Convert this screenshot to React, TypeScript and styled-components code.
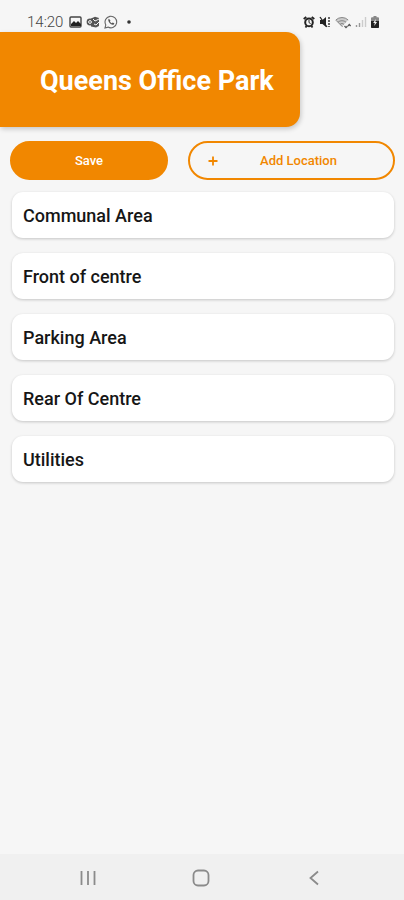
import React from "react";
import styled, { createGlobalStyle } from "styled-components";

const ORANGE = "#f18700";

const GlobalStyle = createGlobalStyle`
  *, *::before, *::after { box-sizing: border-box; }
  body {
    margin: 0;
    background: #f6f6f6;
    font-family: Roboto, "Liberation Sans", sans-serif;
  }
`;

const Screen = styled.div`
  min-height: 100vh;
  display: flex;
  flex-direction: column;
`;

const StatusBar = styled.div`
  display: flex;
  align-items: center;
  justify-content: space-between;
  height: 32px;
  padding: 12px 25px 0 27px;
  color: #333;
`;

const StatusGroup = styled.div`
  display: flex;
  align-items: center;
  gap: 4px;

  svg { display: block; }
`;

const Clock = styled.time`
  margin-right: 2px;
  font-size: 15px;
  line-height: 20px;
  font-weight: 300;
  color: #444;
`;

const Header = styled.header`
  display: flex;
  align-items: center;
  width: calc(100% - 104px);
  min-height: 95px;
  padding: 2px 20px 0 40px;
  border-radius: 0 14px 14px 0;
  background: ${ORANGE};
  box-shadow: 1px 2px 5px rgba(0, 0, 0, 0.2);
`;

const Title = styled.h1`
  margin: 0;
  color: #fff;
  font-size: 27px;
  line-height: 32px;
  font-weight: 700;
  white-space: nowrap;
`;

const Actions = styled.div`
  display: grid;
  grid-template-columns: 158fr 207fr;
  gap: 20px;
  padding: 14px 9px 12px 10px;
`;

const ActionButton = styled.button<{ $outlined?: boolean }>`
  display: flex;
  align-items: center;
  height: 39px;
  padding: ${(p) => (p.$outlined ? "0 14px 0 18px" : "0 18px")};
  border: 2px solid ${ORANGE};
  border-radius: 20px;
  background: ${(p) => (p.$outlined ? "transparent" : ORANGE)};
  color: ${(p) => (p.$outlined ? ORANGE : "#fff")};
  font: 500 13px/16px Roboto, "Liberation Sans", sans-serif;
  cursor: pointer;
`;

const ActionLabel = styled.span`
  flex: 1;
  text-align: center;
`;

const LocationList = styled.ul`
  display: flex;
  flex: 1;
  flex-direction: column;
  gap: 15px;
  margin: 0;
  padding: 0 10px 20px 12px;
  list-style: none;
`;

const LocationCard = styled.button`
  display: block;
  width: 100%;
  min-height: 46px;
  padding: 2px 11px 0;
  border: 0;
  border-radius: 11px;
  background: #fff;
  box-shadow: 0 1px 3px rgba(0, 0, 0, 0.2);
  color: #161616;
  font: 500 18px/24px Roboto, "Liberation Sans", sans-serif;
  text-align: left;
  cursor: pointer;
`;

const NavBar = styled.nav`
  display: grid;
  grid-template-columns: repeat(3, 113px);
  justify-content: center;
  height: 46px;
  padding: 2px 2px 0 0;
  background: #f0f0f0;
`;

const NavButton = styled.button`
  display: flex;
  align-items: center;
  justify-content: center;
  padding: 0;
  border: 0;
  background: none;
  color: #8b8b8b;
  cursor: pointer;
`;

const PictureIcon = () => (
  <svg width="13" height="12" viewBox="0 0 13 12" aria-hidden="true">
    <rect x="1" y="1" width="11" height="10" rx="1" fill="none" stroke="#444" strokeWidth="1.4" />
    <path d="M2 10V8l3-3 2 2 2-2 3 3v2z" fill="#222" />
  </svg>
);

const MailIcon = () => (
  <svg width="14" height="12" viewBox="0 0 14 12" aria-hidden="true">
    <path d="M5 2.5 9 .7 13 2v8l-3 1.5-5-1z" fill="#555" />
    <path d="m7 3 2 2 4-2M8 8l2 1 3-3" fill="none" stroke="#f6f6f6" strokeWidth="1" />
    <circle cx="4" cy="6" r="3.4" fill="#555" />
    <circle cx="4" cy="6" r="1.4" fill="none" stroke="#f6f6f6" />
  </svg>
);

const ChatIcon = () => (
  <svg width="14" height="14" viewBox="0 0 14 14" aria-hidden="true">
    <path d="m1 13 .8-3.1A5.8 5.8 0 1 1 4 12.1z" fill="none" stroke="#666" strokeWidth="1.1" />
    <path d="M4.8 3.8c-1.9 1.6 1.7 6.5 4.5 5.9.9-.3 1-.9.9-1.4L8.7 7.6l-.8.7C7 7.9 6.2 7 5.9 6.2l.6-.8z" fill="#555" />
  </svg>
);

const NotificationDot = () => (
  <svg width="12" height="4" viewBox="0 0 12 4" aria-hidden="true">
    <circle cx="7" cy="2" r="1.8" fill="#333" />
  </svg>
);

const AlarmIcon = () => (
  <svg width="12" height="12" viewBox="0 0 12 12" aria-hidden="true">
    <path d="M.7 3 3.3 1M11.3 3 8.7 1M2.5 11.5l1-1.500M9.500 11.500l-1-1.500" stroke="#222" strokeWidth="1.8" />
    <circle cx="6" cy="6.4" r="3.8" fill="none" stroke="#222" strokeWidth="2" />
    <path d="M6 4v2.600l1.600 1" fill="none" stroke="#222" strokeWidth="1" />
  </svg>
);

const MuteIcon = () => (
  <svg width="12" height="12" viewBox="0 0 12 12" aria-hidden="true">
    <path d="M1 4h2.500L7 1v10L3.500 8H1z" fill="#222" />
    <path d="m1 1 7 10" stroke="#222" strokeWidth="1.3" />
    <path d="M10 1v10" stroke="#444" strokeWidth="1.6" strokeDasharray="2 1" />
  </svg>
);

const WifiIcon = () => (
  <svg width="16" height="13" viewBox="0 0 16 13" aria-hidden="true">
    <path d="M.8 4a9 9 0 0 1 12.400 0L7 10.800z" fill="#ccc" />
    <path d="M.8 4a9 9 0 0 1 12.400 0M3 6.200a6 6 0 0 1 8 0M5 8.300a3 3 0 0 1 4 0" fill="none" stroke="#888" strokeWidth="1" />
    <path d="m1 4.300 6.500 6.500" stroke="#888" strokeWidth="1" />
    <path d="M9.500 10 11 11.700l1.500-1.700M13 10l1.300-1.500 1.300 1.500" fill="none" stroke="#555" strokeWidth="1.2" />
  </svg>
);

const SignalIcon = () => (
  <svg width="12" height="12" viewBox="0 0 12 12" aria-hidden="true">
    <path d="M1.500 9v2M4.500 7v4" stroke="#999" strokeWidth="1.4" />
    <path d="M7.500 4v7M10.500 1v10" stroke="#ccc" strokeWidth="1.4" />
  </svg>
);

const BatteryIcon = () => (
  <svg width="8" height="12" viewBox="0 0 8 12" aria-hidden="true">
    <path d="M2.500 0h3v1.200H7q1 0 1 1V11q0 1-1 1H1q-1 0-1-1V2.200q0-1 1-1h1.500z" fill="#888" />
    <path d="M0 5h8v6q0 1-1 1H1q-1 0-1-1z" fill="#222" />
    <path d="M4.800 3 2.200 7h1.600L3.200 10 6 6H4.400z" fill="#f6f6f6" />
  </svg>
);

const PlusIcon = () => (
  <svg width="10" height="10" viewBox="0 0 10 10" aria-hidden="true">
    <path d="M5 .5v9M.5 5h9" stroke={ORANGE} strokeWidth="1.8" />
  </svg>
);

const RecentsIcon = () => (
  <svg width="16" height="16" viewBox="0 0 16 16" aria-hidden="true">
    <path d="M1.500 1v14M8 1v14M14.500 1v14" stroke="currentColor" strokeWidth="1.8" />
  </svg>
);

const HomeIcon = () => (
  <svg width="18" height="18" viewBox="0 0 18 18" aria-hidden="true">
    <rect x="1.5" y="1.5" width="15" height="15" rx="4.5" fill="none" stroke="currentColor" strokeWidth="1.8" />
  </svg>
);

const BackIcon = () => (
  <svg width="10" height="16" viewBox="0 0 10 16" aria-hidden="true">
    <path d="M9 1.500 1.500 8 9 14.500" fill="none" stroke="currentColor" strokeWidth="1.8" />
  </svg>
);

const locations = ["Communal Area", "Front of centre", "Parking Area", "Rear Of Centre", "Utilities"];

export default function App() {
  return (
    <>
      <GlobalStyle />
      <Screen>
        <StatusBar>
          <StatusGroup>
            <Clock>14:20</Clock>
            <PictureIcon />
            <MailIcon />
            <ChatIcon />
            <NotificationDot />
          </StatusGroup>
          <StatusGroup>
            <AlarmIcon />
            <MuteIcon />
            <WifiIcon />
            <SignalIcon />
            <BatteryIcon />
          </StatusGroup>
        </StatusBar>
        <Header>
          <Title>Queens Office Park</Title>
        </Header>
        <Actions>
          <ActionButton type="button">
            <ActionLabel>Save</ActionLabel>
          </ActionButton>
          <ActionButton type="button" $outlined>
            <PlusIcon />
            <ActionLabel>Add Location</ActionLabel>
          </ActionButton>
        </Actions>
        <LocationList>
          {locations.map((name) => (
            <li key={name}>
              <LocationCard type="button">{name}</LocationCard>
            </li>
          ))}
        </LocationList>
        <NavBar aria-label="System navigation">
          <NavButton type="button" aria-label="Recent apps">
            <RecentsIcon />
          </NavButton>
          <NavButton type="button" aria-label="Home">
            <HomeIcon />
          </NavButton>
          <NavButton type="button" aria-label="Back">
            <BackIcon />
          </NavButton>
        </NavBar>
      </Screen>
    </>
  );
}
